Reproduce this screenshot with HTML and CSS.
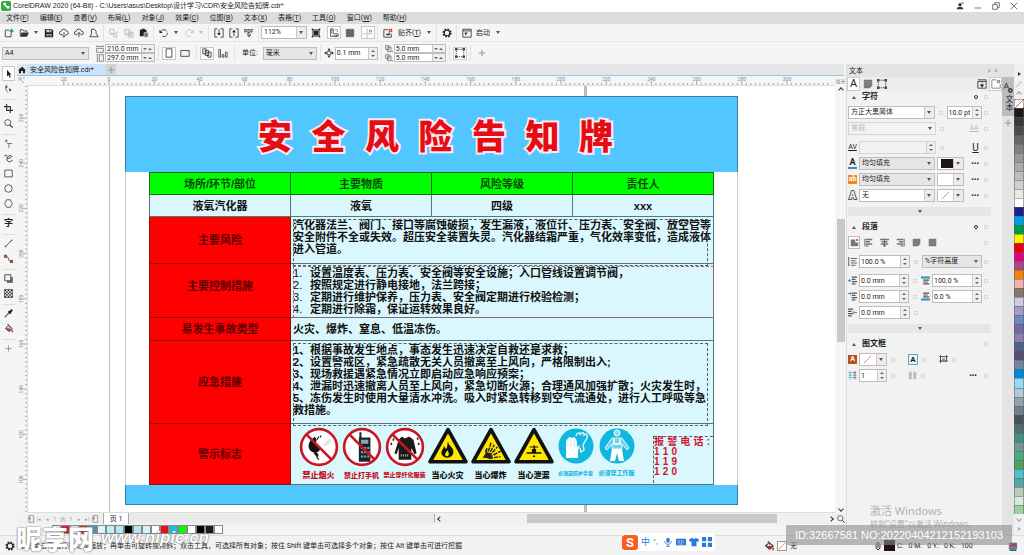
FILE: index.html
```html
<!DOCTYPE html>
<html lang="zh-CN">
<head>
<meta charset="utf-8">
<title>CorelDRAW 2020</title>
<link rel="stylesheet" href="styles.css">
</head>
<body>
<svg class="sprite" aria-hidden="true">
  <defs>
    <symbol id="new" viewBox="0 0 12 12"><path d="M6 2.500H1.500v8h7V6" class="ln"/><path d="M9 1v5M6.500 3.500h5" stroke="#1d9a50" stroke-width="1.800"/></symbol>
    <symbol id="open" viewBox="0 0 12 12"><path d="M1.500 10V2h3l1 1.500h4V5" class="ln"/><path d="M3 5.500h9L9.500 10.500h-8z" fill="#333"/></symbol>
    <symbol id="save" viewBox="0 0 12 12"><path d="M1 1.500h8.500L11 3v8H1z" fill="#222"/><path d="M3 2.500h6v2.500H3zM3 7.500h6v2.500H3z" fill="#ddd"/><path d="M7 2.500v2M4 9h4" stroke="#222"/></symbol>
    <symbol id="cloudd" viewBox="0 0 12 12"><path d="M4 8H2.500a2 2 0 0 1 0-4A3.300 3.300 0 0 1 9 4a2 2 0 0 1 .5 4H8M6 5v6M4 9l2 2 2-2" class="ln"/></symbol>
    <symbol id="cloudu" viewBox="0 0 12 12"><path d="M4 8H2.500a2 2 0 0 1 0-4A3.300 3.300 0 0 1 9 4a2 2 0 0 1 .5 4H8M6 11V5.500M4 7.500l2-2 2 2" class="ln"/></symbol>
    <symbol id="print" viewBox="0 0 12 12"><path d="M3 7V1.500h3.500L8.500 4v3M3 7 1 10.500h10L9 7" class="ln"/></symbol>
    <symbol id="cut" viewBox="0 0 12 12"><path d="M1 1.500h5v5H1zM6 7h3v4H6z" fill="none" stroke="#bbb"/><path d="M2 8h3M8 5h3" stroke="#bbb"/></symbol>
    <symbol id="copy" viewBox="0 0 12 12"><path d="M1 2h6v6H1zM5 5h6v6H5z" fill="#eee" stroke="#b5b5b5"/><path d="M6.500 7h3M6.500 9h3" stroke="#b5b5b5"/></symbol>
    <symbol id="paste" viewBox="0 0 12 12"><path d="M1 2h8v8H1zM3 1h4v2H3z" fill="#222"/><path d="M6 5.500h5v5.500H6z" fill="#777" stroke="#f4f4f4" stroke-width=".6"/></symbol>
    <symbol id="undo" viewBox="0 0 12 12"><path d="M2 4.500a4.200 4.200 0 1 1 2 5.500" class="ln" stroke-dasharray="9 1.500"/><path d="M.5 2v4h4z" fill="#222"/></symbol>
    <symbol id="redo" viewBox="0 0 12 12"><path d="M10 4.500a4.200 4.200 0 1 0-2 5.500" fill="none" stroke="#c4c4c4"/><path d="M11.500 2v4h-4z" fill="#c4c4c4"/></symbol>
    <symbol id="import" viewBox="0 0 12 12"><path d="M4 1H1v10h3M8 1h3v10H8M6 1.500v6" class="ln"/><path d="M3.800 6h4.400L6 9z" fill="#222"/></symbol>
    <symbol id="export" viewBox="0 0 12 12"><path d="M4 1H1v10h3M8 1h3v10H8M6 4v6" class="ln"/><path d="M3.800 5h4.400L6 2z" fill="#222"/></symbol>
    <symbol id="pdf" viewBox="0 0 12 12"><text x="0" y="5.500" font-size="6" font-weight="700" fill="#333">PDF</text><path d="M3 7h3v4M8 7c0 3-2 4-4 2" class="ln"/></symbol>
    <symbol id="full" viewBox="0 0 12 12"><path d="M3 3h6v6H3z" fill="#222"/><path d="m1 1 2 2M11 1 9 3M1 11l2-2M11 11 9 9" class="ln" stroke-width="1.600"/><path d="M2 2h8v8H2z" fill="none" stroke="#555"/></symbol>
    <symbol id="rulers" viewBox="0 0 12 12"><path d="M2 1v9h9V7H5V1zM2 3h1.500M2 5h1.500M7 10V8.500M9 10V8.500" class="ln"/><path d="M6.500 2H10v3" fill="none" stroke="#888"/></symbol>
    <symbol id="grid" viewBox="0 0 12 12"><path d="M1 1h10v10H1z" fill="#888"/><path d="M1 3.500h10M1 6h10M1 8.500h10M3.500 1v10M6 1v10M8.500 1v10" stroke="#444" stroke-width=".7"/></symbol>
    <symbol id="guides" viewBox="0 0 12 12"><path d="M0 7h12M5 1v11" fill="none" stroke="#999" stroke-dasharray="2 1"/><circle cx="9" cy="3.500" r="1.500" fill="none" stroke="#777"/></symbol>
    <symbol id="snapoff" viewBox="0 0 12 12"><path d="M6 2H1v9h9V7" class="ln"/><path d="M3 7h4V4L9 8 5 9z" fill="#333"/><path d="m7 1 4 4m0-4L7 5" stroke="#d22" stroke-width="1.300"/></symbol>
    <symbol id="gear" viewBox="0 0 12 12"><circle cx="6" cy="6" r="4.500" fill="none" stroke="#222" stroke-width="2" stroke-dasharray="2 1.530"/><circle cx="6" cy="6" r="3.300" fill="none" stroke="#222" stroke-width="1.300"/></symbol>
    <symbol id="launch" viewBox="0 0 12 12"><path d="M1 1.500h10v9.500H1zM1 3.500h10" class="ln"/><path d="M3 5.500h4L4 9z" fill="#333"/></symbol>
    <symbol id="wd" viewBox="0 0 12 12"><path d="M1 5h10v6H1zM1 1v2M11 1v2M1 2h10" fill="none" stroke="#555"/></symbol>
    <symbol id="ht" viewBox="0 0 12 12"><path d="M5 1h6v10H5zM1 1h2M1 11h2M2 1v10" fill="none" stroke="#555"/></symbol>
    <symbol id="port" viewBox="0 0 12 12"><path d="M2.500 1h7v10h-7z" class="ln"/></symbol>
    <symbol id="land" viewBox="0 0 12 12"><path d="M1 3h10v7H1z" class="ln"/></symbol>
    <symbol id="pages" viewBox="0 0 12 12"><path d="M1 1h4v6H1zM4 3h4v6H4zM7 5h4v6H7z" fill="#f4f4f4" stroke="#333"/></symbol>
    <symbol id="bars" viewBox="0 0 12 12"><path d="M1 2h2v9H1zM5 8h2v3H5zM9 5h2v6H9z" fill="none" stroke="#444"/></symbol>
    <symbol id="nudge" viewBox="0 0 12 12"><path d="M6 0l2 3H4zM6 12l2-3H4zM0 6l3-2v4zM12 6 9 4v4z" fill="#333"/><circle cx="6" cy="6" r="2.300" fill="none" stroke="#333"/></symbol>
    <symbol id="dup" viewBox="0 0 12 12"><path d="M1 1h5v6H1zM4 3h5v7H4zM10 10h2" fill="none" stroke="#555"/></symbol>
    <symbol id="bbox" viewBox="0 0 12 12"><path d="M1.500 1.500h9v9h-9z" fill="none" stroke="#333" stroke-dasharray="1.500 1"/><path d="M0 0h3v3H0zM9 0h3v3H9zM0 9h3v3H0zM9 9h3v3H9z" fill="#444"/></symbol>
    <symbol id="home" viewBox="0 0 12 12"><path d="m6 1 6 5.500h-1.500V11H7.500V7.500h-3V11H1.500V6.500H0z" fill="#222"/></symbol>
    <symbol id="pick" viewBox="0 0 12 12"><path d="M4 1v9l2-2 1.500 3.500L9 11 7.500 7.500H10z" fill="#222"/></symbol>
    <symbol id="shape" viewBox="0 0 12 12"><path d="M4 1C1 4 2 8 5 11" class="ln"/><path d="M2.500 3h2v2h-2zM7 5v5l1.500-1h2z" fill="#333"/></symbol>
    <symbol id="crop" viewBox="0 0 12 12"><path d="M3.500 0v8.500H12M0 3.500h8.500V12" fill="none" stroke="#333" stroke-width="1.500"/></symbol>
    <symbol id="zoomt" viewBox="0 0 12 12"><circle cx="5" cy="4.800" r="4" class="ln"/><path d="m8 8 3.500 3.500" class="ln" stroke-width="1.500"/></symbol>
    <symbol id="free" viewBox="0 0 12 12"><path d="M1 2.500h4M3 .5v4M4 6h7M6.500 6v6" fill="none" stroke="#555"/></symbol>
    <symbol id="art" viewBox="0 0 12 12"><path d="M1 3c0-2 3-2 3 0M4 6c-1-3 7-6 6-2-1 2-7 1-6 4 1 3 6 3 7 0" class="ln" stroke-width="1.300"/></symbol>
    <symbol id="rect" viewBox="0 0 12 12"><path d="M1 1.500h10v9H1z" class="ln"/></symbol>
    <symbol id="ell" viewBox="0 0 12 12"><circle cx="6" cy="6" r="5" class="ln"/></symbol>
    <symbol id="poly" viewBox="0 0 12 12"><path d="M3.500 1h5L11 6 8.500 11h-5L1 6z" class="ln"/></symbol>
    <symbol id="line" viewBox="0 0 12 12"><path d="m2 10 8-8" class="ln"/><path d="M1 9h2v2H1zM9 1h2v2H9z" fill="#555"/></symbol>
    <symbol id="conn" viewBox="0 0 12 12"><path d="m2 3 3 1 2 5 3 1" class="ln"/><path d="M0 1h4v4H0zM8 8h4v4H8z" fill="#8a5138"/></symbol>
    <symbol id="shadow" viewBox="0 0 12 12"><path d="M4 4h8v8H4z" fill="#777"/><path d="M1 1h8v8H1z" fill="#f4f4f4" stroke="#222"/></symbol>
    <symbol id="check" viewBox="0 0 12 12"><path d="M.5.500h11v11H.5z" fill="#fff" stroke="#333"/><path d="M1 2h10M1 6h10M1 10h10" stroke="#222" stroke-width="2" stroke-dasharray="2 2"/><path d="M3 4h8M3 8h8" stroke="#222" stroke-width="2" stroke-dasharray="2 2"/></symbol>
    <symbol id="drop" viewBox="0 0 12 12"><path d="m1 11 6-6" stroke="#8a6a50" stroke-width="2"/><path d="m6 3 3 3M8 4l3-3" stroke="#222" stroke-width="2.500"/></symbol>
    <symbol id="bucket" viewBox="0 0 12 12"><path d="m2 6 4-4 5 4-4 4z" fill="#fff" stroke="#333" stroke-width="1.300"/><path d="M2 6c3-1 5 0 8 0l-3 4z" fill="#a33"/><path d="M4 0c3 0 3 3 3 5" class="ln"/><path d="M11 8v3" stroke="#c33" stroke-width="2"/></symbol>
    <symbol id="plus" viewBox="0 0 12 12"><path d="M6 2v8M2 6h8" stroke="#999" stroke-width="1.300"/></symbol>
    <symbol id="block" viewBox="0 0 12 12"><path d="M1 1h10v7L8 11H1z" fill="#777"/><path d="M1 4h10M1 7h10" stroke="#999" stroke-width=".6"/></symbol>
    <symbol id="blockf" viewBox="0 0 12 12"><path d="M1 1h10v10H1z" fill="#777"/><path d="M1 4h10M1 7h10" stroke="#999" stroke-width=".6"/></symbol>
    <symbol id="al" viewBox="0 0 12 12"><path d="M1 1v10" stroke="#555"/><path d="M2 2h9M2 5h6M2 8h9M2 10.500h4" stroke="#777" stroke-width="1.800"/></symbol>
    <symbol id="ac" viewBox="0 0 12 12"><path d="M0 2h12M2 5h8M1 8h10M4 10.500h4" stroke="#777" stroke-width="1.800"/><path d="M6 1v10" stroke="#555"/></symbol>
    <symbol id="ar" viewBox="0 0 12 12"><path d="M11 1v10" stroke="#555"/><path d="M1 2h9M4 5h6M1 8h9M6 10.500h4" stroke="#777" stroke-width="1.800"/></symbol>
    <symbol id="an" viewBox="0 0 12 12"><path d="M1 2h6v4h4v5H1z" fill="#777"/><path d="m8 1 3 3m0-3L8 4" stroke="#d33" stroke-width="1.200"/></symbol>
    <symbol id="ind" viewBox="0 0 12 12"><path d="M5 1.500h7M5 4.500h5M5 7.500h7M5 10.500h5" stroke="#555" stroke-width="1.500"/><path d="M0 6h4M2 4v4" stroke="#2d9fc4" stroke-width="1.500"/></symbol>
    <symbol id="ind1" viewBox="0 0 12 12"><path d="M5 1.500h7M5 4.500h5M5 7.500h7M5 10.500h5" stroke="#555" stroke-width="1.500"/><path d="M0 2h5M3 0v4" stroke="#2d9fc4" stroke-width="1.300"/></symbol>
    <symbol id="indr" viewBox="0 0 12 12"><path d="M0 1.500h7M0 4.500h5M0 7.500h7M0 10.500h5" stroke="#555" stroke-width="1.500"/><path d="M7 6h5M8 4v4" stroke="#2d9fc4" stroke-width="1.300"/></symbol>
    <symbol id="lsp" viewBox="0 0 12 12"><path d="M4 2h8M4 5h6M4 8h8M4 11h6M1 1v10M0 1h2M0 11h2" stroke="#555" stroke-width="1.200"/></symbol>
    <symbol id="bef" viewBox="0 0 12 12"><path d="M0 2h12" stroke="#2d9fc4" stroke-width="3"/><path d="M3 5.500h8M3 8h6M3 10.500h8" stroke="#555" stroke-width="1.400"/></symbol>
    <symbol id="aft" viewBox="0 0 12 12"><path d="M0 10h12" stroke="#2d9fc4" stroke-width="3"/><path d="M3 1.500h8M3 4h6M3 6.500h8" stroke="#555" stroke-width="1.400"/></symbol>
    <symbol id="cols" viewBox="0 0 12 12"><path d="M3 1v10" stroke="#5bb5d0" stroke-width="4" stroke-dasharray="1.500 .8"/><path d="M9 1v10" stroke="#777" stroke-width="4" stroke-dasharray="1.500 .8"/></symbol>
    <symbol id="cols2" viewBox="0 0 12 12"><path d="M3 1v10M9 1v10" stroke="#bbb" stroke-width="4"/></symbol>
    <symbol id="frm" viewBox="0 0 12 12"><path d="M2 2h8v6H2zM0 2h2M10 2h2M0 8h12M2 0v11M10 0v9" fill="none" stroke="#444"/><path d="M4 4h4M4 6h4" stroke="#777"/></symbol>
    <symbol id="none" viewBox="0 0 12 12"><path d="M1 11 11 1" stroke="#d66" stroke-width="1"/></symbol>
    <symbol id="store" viewBox="0 0 12 12"><path d="M1 3h10v8H1zM1 1h10v2" class="ln"/><path d="M6 4v3M4 7h4L6 10z" fill="#222" stroke="#222" stroke-width=".6"/></symbol>
    <symbol id="pin" viewBox="0 0 12 12"><path d="M6 1H1v10h10V6" fill="none" stroke="#777"/><circle cx="9" cy="3" r="1.500" class="ln"/></symbol>
    <symbol id="leaf" viewBox="0 0 12 12"><rect width="12" height="12" rx="2" fill="#3da748"/><path d="m3 3 6 6M3 3h3M9 9V6" stroke="#fff" stroke-width="2"/></symbol>
    <symbol id="fig" viewBox="0 0 12 12"><circle cx="6" cy="4" r="2.500" fill="#333"/><path d="M1 11c0-5 10-5 10 0z" fill="#333"/><path d="M10 0v3M8.500 1.500h3" stroke="#c33"/></symbol>
    <symbol id="pg" viewBox="0 0 12 12"><path d="M3 1h7v10H3zM1 5h5M4 3v5" fill="none" stroke="#777"/></symbol>
  </defs>
</svg>

<div class="app">
  <header class="titlebar">
    <svg class="ic"><use href="#leaf"/></svg>
    <h1>CorelDRAW 2020 (64-Bit) - C:\Users\asus\Desktop\设计学习\CDR\安全风险告知牌.cdr*</h1>
    <div class="winctl">
      <button aria-label="用户"><svg class="ic"><use href="#fig"/></svg></button>
      <button aria-label="最小化"><svg class="ic" viewBox="0 0 12 12"><path d="M1 9h10" class="ln"/></svg></button>
      <button aria-label="还原"><svg class="ic" viewBox="0 0 12 12"><path d="M1 4h7v7H1zM4 4V1h7v7H8" class="ln"/></svg></button>
      <button aria-label="关闭"><svg class="ic" viewBox="0 0 12 12"><path d="m1 1 10 10m0-10L1 11" class="ln"/></svg></button>
    </div>
  </header>
  <nav class="menubar">
    <button>文件(<u>F</u>)</button><button>编辑(<u>E</u>)</button><button>查看(<u>V</u>)</button><button>布局(<u>L</u>)</button><button>对象(<u>J</u>)</button><button>效果(<u>C</u>)</button><button>位图(<u>B</u>)</button><button>文本(<u>X</u>)</button><button>表格(<u>T</u>)</button><button>工具(<u>O</u>)</button><button>窗口(<u>W</u>)</button><button>帮助(<u>H</u>)</button>
  </nav>
  <div class="toolbar">
    <button aria-label="新建"><svg class="ic"><use href="#new"/></svg></button>
    <button aria-label="打开"><svg class="ic"><use href="#open"/></svg></button>
    <i class="caret"></i>
    <button aria-label="保存"><svg class="ic"><use href="#save"/></svg></button>
    <button aria-label="云下载"><svg class="ic"><use href="#cloudd"/></svg></button>
    <button aria-label="云上传"><svg class="ic"><use href="#cloudu"/></svg></button>
    <button aria-label="打印"><svg class="ic"><use href="#print"/></svg></button>
    <i class="sep"></i>
    <button aria-label="剪切"><svg class="ic"><use href="#cut"/></svg></button>
    <button aria-label="复制"><svg class="ic"><use href="#copy"/></svg></button>
    <button aria-label="粘贴"><svg class="ic"><use href="#paste"/></svg></button>
    <i class="sep"></i>
    <button aria-label="撤消"><svg class="ic"><use href="#undo"/></svg></button>
    <i class="caret"></i>
    <button aria-label="重做"><svg class="ic"><use href="#redo"/></svg></button>
    <i class="caret pale"></i>
    <i class="sep"></i>
    <button aria-label="导入"><svg class="ic"><use href="#import"/></svg></button>
    <button aria-label="导出"><svg class="ic"><use href="#export"/></svg></button>
    <button aria-label="发布为PDF"><svg class="ic"><use href="#pdf"/></svg></button>
    <i class="sep"></i>
    <span class="sel white zoomsel"><select aria-label="缩放级别"><option>112%</option></select></span>
    <button class="wide" aria-label="全屏预览"><svg class="ic"><use href="#full"/></svg></button>
    <button class="on" aria-label="标尺"><svg class="ic"><use href="#rulers"/></svg></button>
    <button class="wide" aria-label="网格"><svg class="ic"><use href="#grid"/></svg></button>
    <button class="on" aria-label="辅助线"><svg class="ic"><use href="#guides"/></svg></button>
    <i class="sep"></i>
    <button aria-label="关闭贴齐"><svg class="ic"><use href="#snapoff"/></svg></button>
    <button class="txt"><span>贴齐(<u>T</u>)</span></button>
    <i class="caret"></i>
    <i class="sep"></i>
    <button aria-label="选项"><svg class="ic"><use href="#gear"/></svg></button>
    <i class="sep"></i>
    <button class="txt"><svg class="ic"><use href="#launch"/></svg>启动</button>
    <i class="caret"></i>
  </div>
  <div class="propbar">
    <span class="sel papersel"><select aria-label="页面大小"><option>A4</option></select></span>
    <div class="pair pagepair">
      <label><svg class="ic sm"><use href="#wd"/></svg><span class="num two"><input value="210.0 mm" aria-label="宽度"></span></label>
      <label><svg class="ic sm"><use href="#ht"/></svg><span class="num two"><input value="297.0 mm" aria-label="高度"></span></label>
    </div>
    <i class="sep"></i>
    <button class="on" aria-label="纵向"><svg class="ic"><use href="#port"/></svg></button>
    <button class="wide" aria-label="横向"><svg class="ic"><use href="#land"/></svg></button>
    <i class="sep"></i>
    <button class="on" aria-label="所有页面"><svg class="ic"><use href="#pages"/></svg></button>
    <button class="wide" aria-label="当前页面"><svg class="ic"><use href="#bars"/></svg></button>
    <i class="sep"></i>
    <label class="unit" for="unit">单位:</label>
    <span class="sel unitsel"><select id="unit"><option>毫米</option></select></span>
    <i class="sep"></i>
    <svg class="ic"><use href="#nudge"/></svg>
    <span class="num nudge"><input value="0.1 mm" aria-label="微调距离"></span>
    <i class="sep"></i>
    <div class="pair duppair">
      <label><svg class="ic sm"><use href="#dup"/></svg><span class="num two"><input value="5.0 mm" aria-label="再制 X"></span></label>
      <label><svg class="ic sm"><use href="#dup"/></svg><span class="num two"><input value="5.0 mm" aria-label="再制 Y"></span></label>
    </div>
    <i class="sep"></i>
    <button class="on" aria-label="视为已填充"><svg class="ic"><use href="#bbox"/></svg></button>
    <i class="sep"></i>
    <button class="wide" aria-label="自定义"><svg class="ic"><use href="#plus"/></svg></button>
  </div>

  <div class="work">
    <aside class="toolbox">
      <button class="on" aria-label="选择"><svg class="ic"><use href="#pick"/></svg></button>
      <button class="end" aria-label="形状"><svg class="ic"><use href="#shape"/></svg></button>
      <button aria-label="裁剪"><svg class="ic"><use href="#crop"/></svg></button>
      <button class="end" aria-label="缩放"><svg class="ic"><use href="#zoomt"/></svg></button>
      <button aria-label="手绘"><svg class="ic"><use href="#free"/></svg></button>
      <button aria-label="艺术笔"><svg class="ic"><use href="#art"/></svg></button>
      <button aria-label="矩形"><svg class="ic"><use href="#rect"/></svg></button>
      <button aria-label="椭圆形"><svg class="ic"><use href="#ell"/></svg></button>
      <button class="end" aria-label="多边形"><svg class="ic"><use href="#poly"/></svg></button>
      <button class="end word">字</button>
      <button aria-label="平行度量"><svg class="ic"><use href="#line"/></svg></button>
      <button class="end" aria-label="连接器"><svg class="ic"><use href="#conn"/></svg></button>
      <button aria-label="阴影"><svg class="ic"><use href="#shadow"/></svg></button>
      <button class="end" aria-label="透明度"><svg class="ic"><use href="#check"/></svg></button>
      <button aria-label="颜色滴管"><svg class="ic"><use href="#drop"/></svg></button>
      <button class="end" aria-label="交互式填充"><svg class="ic"><use href="#bucket"/></svg></button>
      <button aria-label="添加工具"><svg class="ic"><use href="#plus"/></svg></button>
    </aside>

    <main class="center">
      <div class="doctabs">
        <button class="homebtn" aria-label="欢迎屏幕"><svg class="ic"><use href="#home"/></svg></button>
        <button class="doctab">安全风险告知牌.cdr*</button>
        <button class="addtab" aria-label="新文档"><svg class="ic"><use href="#plus"/></svg></button>
      </div>
      <div class="stage">
        <svg class="corner" viewBox="0 0 10 9"><path d="M2 2l5 5M2 5V2h3M6 2h2" fill="none" stroke="#aaa"/></svg>
        <svg class="hruler" id="hruler"></svg>
        <svg class="vruler" id="vruler"></svg>
        <div class="canvas">
          <div class="guide"></div>
          <section class="sheet">
            <h2 class="headline"><span>安</span><span>全</span><span>风</span><span>险</span><span>告</span><span>知</span><span>牌</span></h2>
            <table class="card">
              <tr class="green"><th>场所/环节/部位</th><th>主要物质</th><th>风险等级</th><th>责任人</th></tr>
              <tr class="vals"><td>液氧汽化器</td><td>液氧</td><td>四级</td><td>xxx</td></tr>
              <tr class="r1"><th>主要风险</th><td colspan="3"><p class="frame narrow">汽化器法兰、阀门、接口等腐蚀破损，发生漏液，液位计、压力表、安全阀、放空管等<br>安全附件不全或失效。超压安全装置失灵。汽化器结霜严重，气化效率变低，造成液体<br>进入管道。</p></td></tr>
              <tr class="r2"><th>主要控制措施</th><td colspan="3"><ol class="frame">
                <li>设置温度表、压力表、安全阀等安全设施；入口管线设置调节阀，</li>
                <li>按照规定进行静电接地，法兰跨接；</li>
                <li>定期进行维护保养，压力表、安全阀定期进行校验检测；</li>
                <li>定期进行除霜，保证运转效果良好。</li></ol></td></tr>
              <tr class="r3"><th>易发生事故类型</th><td colspan="3"><p>火灾、爆炸、窒息、低温冻伤。</p></td></tr>
              <tr class="r4"><th>应急措施</th><td colspan="3"><p class="frame narrow">1、根据事故发生地点，事态发生迅速决定自救还是求救；<br>2、设置警戒区，紧急疏散无关人员撤离至上风向，严格限制出入;<br>3、现场救援遇紧急情况立即启动应急响应预案；<br>4、泄漏时迅速撤离人员至上风向，紧急切断火源；合理通风加强扩散；火灾发生时，<br>5、冻伤发生时使用大量清水冲洗。吸入时紧急转移到空气流通处，进行人工呼吸等急<br>救措施。</p></td></tr>
              <tr class="r5"><th>警示标志</th><td colspan="3"><div class="signs">
                <figure class="ban"><svg viewBox="0 0 38 38"><circle cx="19" cy="19" r="17.500" fill="#fff"/><path d="M15 10c-5 3-7 8-4 12 3 3 8 2 9-2-4 1-2-4-5-5 2-1 1-4 0-5zM14 25c4-1 5 2 3 4l2 2M20 10l1-2M17 12l2-3" fill="#111" stroke="#111"/><path d="m24 18 6-6" stroke="#e4e4e4" stroke-width="3"/><circle cx="19" cy="19" r="17" class="ring"/><path d="m7 7 24 24" class="ring"/></svg><figcaption>禁止烟火</figcaption></figure>
                <figure class="ban s7"><svg viewBox="0 0 38 38"><circle cx="19" cy="19" r="17.500" fill="#fff"/><path d="M16 10h11v23H16z" fill="#16262e"/><path d="M17.500 5v6" stroke="#16262e" stroke-width="2"/><path d="M18 12h7v4h-7zM18 19h2v2h-2zM21 19h2v2h-2zM24 19h2v2h-2zM18 23h2v2h-2zM21 23h2v2h-2zM24 23h2v2h-2zM18 27h2v2h-2zM21 27h2v2h-2zM24 27h2v2h-2z" fill="#8aa5ae"/><circle cx="19" cy="19" r="17" class="ring"/><path d="m7 7 24 24" class="ring"/></svg><figcaption>禁止打手机</figcaption></figure>
                <figure class="ban s6"><svg viewBox="0 0 38 38"><circle cx="19" cy="19" r="17.500" fill="#fff"/><path d="m16 9 3 2 4-2 4 3 3 13-2 1-3-6v11H13V20l-2 6-2-1 4-13z" fill="#1a1a1a"/><path d="M15 27h7" stroke="#aaa" stroke-width="2" stroke-dasharray="1 1"/><path d="M8 11v2M6 15v2M31 10v2M32 15v2" stroke="#222" stroke-width="1.500"/><circle cx="19" cy="19" r="17" class="ring"/><path d="m7 7 24 24" class="ring"/></svg><figcaption>禁止穿纤化服装</figcaption></figure>
                <figure><svg viewBox="0 0 38 38"><path d="M19 2.500 36 33H2z" class="tri"/><path d="M19 14c1 5 6 5 5 11-1 5-9 6-11 1-1-4 2-5 2-8l2 3c2-2 1-5 2-7z" fill="#111"/><path d="M18.500 22c1 2 2 3 1 5-2 2-4 0-3-2z" fill="#ffe600"/></svg><figcaption>当心火灾</figcaption></figure>
                <figure><svg viewBox="0 0 38 38"><path d="M19 2.500 36 33H2z" class="tri"/><path d="m14 29 1-9M15 28l4-13M16 28l6-11M17 28l8-9M17 29l11-6M17 30l11-2" fill="none" stroke="#222" stroke-width="1.400" stroke-dasharray="4 1"/><path d="m11 29 3-4-1-4 3 4 3 0-2 5z" fill="#222"/></svg><figcaption>当心爆炸</figcaption></figure>
                <figure><svg viewBox="0 0 38 38"><path d="M19 2.500 36 33H2z" class="tri"/><path d="M12 24h5v-3h4v3h5v1.500H12zM15 18.500h8v1h-8zM18.500 17.500h1.500v5h-1.500zM18 27h2v1.500h-2z" fill="#111"/></svg><figcaption>当心泄漏</figcaption></figure>
                <figure class="must s5"><svg viewBox="0 0 38 38"><circle cx="19" cy="19" r="17.500" fill="#10b8e0"/><path d="M9 31V14l2-3 2-1 2 1 2-1 2 2 1 3v5l3-2-2 6v7z" fill="#fff"/><path d="M11 12v8M14 12v8M17 12v8" stroke="#a5e4f2" stroke-width=".7"/><path d="M19 9c1-4 4-4 4-1 1-3 4-3 4 0 2-2 4 0 3 3l-4 7 1 5-3 2-1-4" fill="none" stroke="#d8f4fb" stroke-width="1.500"/></svg><figcaption>必须戴防护手套</figcaption></figure>
                <figure class="must s6"><svg viewBox="0 0 38 38"><circle cx="19" cy="19" r="17.500" fill="#10b8e0"/><circle cx="19" cy="6" r="3" fill="#8fdcf0" stroke="#fff"/><path d="m14 11 10 0 7 10-2 2-5-6v5l-10 0v-5l-5 6-2-2z" fill="#6fd2ea" stroke="#e8fafd"/><path d="M14 22h10l2 12h-5l-2-8-2 8h-5z" fill="#fff"/><path d="M16 12v5h6v-5" fill="none" stroke="#fff" stroke-width="1.500"/></svg><figcaption>必须穿工作服</figcaption></figure>
                <div class="phone"><p><span>报</span><span>警</span><span>电</span><span>话</span><span>:</span></p><p class="n"><span>1</span><span>1</span><span>0</span></p><p class="n"><span>1</span><span>1</span><span>9</span></p><p class="n"><span>1</span><span>2</span><span>0</span></p></div>
              </div></td></tr>
            </table>
            <div class="foot"></div>
          </section>
        </div>
        <div class="vscroll"><span class="mm">毫米</span><button aria-label="向上滚动"><i class="chev up"></i></button><i class="thumb"></i><button aria-label="向下滚动"><i class="chev"></i></button></div>
      </div>
      <div class="pagebar">
        <svg class="ic sm"><use href="#pg"/></svg><span class="nav">|◂</span><span class="nav">◂</span><span class="nav">1</span><span class="nav">的</span><span class="nav">1</span><span class="nav">▸</span><span class="nav">▸|</span><svg class="ic sm"><use href="#pg"/></svg>
        <button class="pagetab">页 1</button>
        <div class="hpad"></div>
        <button class="arrow" aria-label="向左滚动"><i class="chev left"></i></button>
        <div class="hscroll"><i class="hthumb"></i></div>
        <button class="arrow" aria-label="向右滚动"><i class="chev right"></i></button>
        <button class="arrow" aria-label="导航器"><svg class="ic sm"><use href="#zoomt"/></svg></button>
      </div>
      <div class="docpal" id="docpal"></div>
    </main>

    <aside class="docker">
      <header><span>文本</span><span class="dctl">»&nbsp; ×</span></header>
      <div class="dtabs">
        <button class="on big">A</button><button aria-label="段落"><svg class="ic"><use href="#block"/></svg></button><button aria-label="图文框"><svg class="ic"><use href="#bbox"/></svg></button>
        <button class="push" aria-label="保存样式"><svg class="ic"><use href="#store"/></svg></button><button class="on" aria-label="固定"><svg class="ic"><use href="#pin"/></svg></button>
      </div>
      <div class="dbody">
        <h3><i class="fold"></i>字符<i class="ringdot"></i><i class="cb"></i></h3>
        <div class="row"><span class="sel white w87"><select aria-label="字体"><option>方正大黑简体</option></select></span><i class="cb"></i><span class="num w34"><input value="10.0 pt" aria-label="字号"></span><i class="cb last"></i></div>
        <div class="row off"><span class="sel w87"><select disabled aria-label="字体样式"><option>常规</option></select></span><i class="cb"></i><b class="g aa push">AA</b><i class="cb"></i></div>
        <div class="row tall off"><b class="g av">AV</b><span class="num w77"><input disabled aria-label="字距"></span><i class="cb"></i><b class="g under push">U</b><i class="cb"></i></div>
        <div class="row"><b class="g ga">A</b><span class="sel w77"><select aria-label="填充类型"><option>均匀填充</option></select></span><span class="sel white w27 colr"><i class="chip dark"></i></span><b class="dots">•••</b><i class="cb last"></i></div>
        <div class="row"><b class="g gab">ab</b><span class="sel w77"><select aria-label="背景填充类型"><option>均匀填充</option></select></span><span class="sel white w27 colr"></span><b class="dots">•••</b><i class="cb last"></i></div>
        <div class="row"><b class="g go">A</b><span class="sel white w77"><select aria-label="轮廓宽度"><option>无</option></select></span><span class="sel white w27 colr"><svg class="ic"><use href="#none"/></svg></span><b class="dots">•••</b><i class="cb last"></i></div>
        <button class="more" aria-label="更多字符选项"><i class="caret"></i></button>
        <h3><i class="fold"></i>段落<i class="ringdot"></i><i class="cb"></i></h3>
        <div class="row aligns"><button class="on" aria-label="无对齐"><svg class="ic"><use href="#an"/></svg></button><svg class="ic"><use href="#al"/></svg><svg class="ic"><use href="#ac"/></svg><svg class="ic"><use href="#ar"/></svg><svg class="ic"><use href="#block"/></svg><svg class="ic"><use href="#blockf"/></svg><i class="cb last"></i></div>
        <div class="row tall"><svg class="ic"><use href="#lsp"/></svg><span class="num w51"><input value="100.0 %" aria-label="行间距"></span><i class="cb"></i><span class="sel w60"><select aria-label="行距单位"><option>%字符高度</option></select></span><i class="cb last"></i></div>
        <div class="row tall"><svg class="ic"><use href="#ind"/></svg><span class="num w51"><input value="0.0 mm" aria-label="左缩进"></span><i class="cb"></i><svg class="ic"><use href="#bef"/></svg><span class="num w51"><input value="100.0 %" aria-label="段前间距"></span><i class="cb last"></i></div>
        <div class="row"><svg class="ic"><use href="#ind1"/></svg><span class="num w51"><input value="0.0 mm" aria-label="首行缩进"></span><i class="cb"></i><svg class="ic"><use href="#aft"/></svg><span class="num w51"><input value="0.0 %" aria-label="段后间距"></span><i class="cb last"></i></div>
        <div class="row"><svg class="ic"><use href="#indr"/></svg><span class="num w51"><input value="0.0 mm" aria-label="右缩进"></span><i class="cb"></i></div>
        <button class="more" aria-label="更多段落选项"><i class="caret"></i></button>
        <h3><i class="fold"></i>图文框<i class="cb last"></i></h3>
        <div class="row frames"><b class="g gbox">A</b><span class="sel white w27 colr"><svg class="ic"><use href="#none"/></svg></span><i class="cb"></i><b class="g gblue sp">A</b><i class="cb"></i><svg class="ic sp"><use href="#frm"/></svg><i class="cb"></i></div>
        <div class="row frames"><svg class="ic"><use href="#cols"/></svg><span class="num w27"><input value="1" aria-label="栏数"></span><i class="cb"></i><svg class="ic sp"><use href="#cols2"/></svg><i class="cb"></i><b class="dots push">•••</b><i class="cb"></i></div>
      </div>
      <div class="activate"><p>激活 Windows</p><p class="small">转到“设置”以激活 Windows。</p></div>
    </aside>
    <div class="sidetabs"><button class="vtab"><svg class="ic" viewBox="0 0 12 12"><path d="M1 7 4 0l3 7M2 5h4" class="ln"/><circle cx="9" cy="9" r="2" fill="none" stroke="#222" stroke-width="1.500"/></svg>文本</button><button aria-label="添加泊坞窗"><svg class="ic"><use href="#plus"/></svg></button></div>
    <div class="palette">
      <button aria-label="展开"><i class="tri-r"></i></button>
      <button aria-label="滴管"><svg class="ic sm" viewBox="0 0 12 12"><path d="m1 11 8-8M7 2l3 3" stroke="#999"/></svg></button>
      <button aria-label="向上"><i class="chev up pale"></i></button>
      <div class="swatches" id="swatches"></div>
      <button aria-label="向下"><i class="chev pale"></i></button>
      <button aria-label="更多">»</button>
    </div>
  </div>

  <footer class="status">
    <svg class="ic"><use href="#gear"/></svg>
    <p>接着单击可进行拖动或缩放；再单击可旋转或倾斜；双击工具，可选择所有对象；按住 Shift 键单击可选择多个对象；按住 Alt 键单击可进行挖掘</p>
    <div class="fillinfo"><svg class="ic"><use href="#bucket"/></svg><svg class="ic boxed"><use href="#none"/></svg><span>无</span></div>
    <div class="ink"><svg class="ic sm" viewBox="0 0 12 12"><path d="M6 0l3 4v5l-3 3-3-3V4zM6 3v6" fill="none" stroke="#333" stroke-width="1.500"/></svg><i class="chip dark"></i><span>C: &nbsp; 0 M: &nbsp; 0 Y: &nbsp; 0 K: &nbsp; 100</span></div>
    <svg class="ic proof" viewBox="0 0 12 12"><path d="M1 2h10v8H1z" fill="#5c7fa5"/><path d="M2 3h8v3H2z" fill="#c33"/><path d="M2 10h8v2H2z" fill="#555"/></svg>
    <div class="ime"><b class="sogou">S</b><span>中</span><span class="dotm">°,</span><svg class="ic" viewBox="0 0 12 12"><rect x="4" y="1" width="4" height="6" rx="2" fill="#2c7ad6"/><path d="M2 5c0 5 8 5 8 0M6 9v3M4 11.500h4" fill="none" stroke="#2c7ad6"/></svg><svg class="ic" viewBox="0 0 12 12"><path d="M0 2h12v8H0z" fill="#2c7ad6"/><path d="M2 4.500h8M2 6.500h8M3 8.500h6" stroke="#fff" stroke-dasharray="1 1"/></svg><svg class="ic" viewBox="0 0 12 12"><path d="M4 1 0 3l1 3 2-1v6h6V5l2 1 1-3-4-2c-1 2-3 2-4 0z" fill="#2c7ad6"/></svg><svg class="ic" viewBox="0 0 12 12"><path d="M0 0h5v5H0zM7 0h5v5H7zM0 7h5v5H0zM7 7h5v5H7z" fill="#2c7ad6"/></svg></div>
  </footer>
  <div class="mark"><b>昵享网</b><em>www.nipic.cn</em></div>
  <div class="idband">ID:32667581 NO:20220404212152193103</div>
</div>
<script src="script.js"></script>
</body>
</html>
```

FILE: styles.css
```css
* { box-sizing: border-box; }
body {
  margin: 0;
  height: 100vh;
  overflow: hidden;
  background: #f4f4f4;
  color: #222;
  font: 7px/10px Roboto, "Noto Sans CJK SC", sans-serif;
}
h1, h2, h3, p, ol, figure { margin: 0; padding: 0; font-weight: inherit; }
button, input, select { font: inherit; color: inherit; margin: 0; }
button { border: 0; padding: 0; background: none; display: flex; align-items: center; justify-content: center; }
i { font-style: normal; }
.sprite { position: absolute; width: 0; height: 0; }
.ln { fill: none; stroke: #333; }
.ic { width: 10px; height: 10px; flex: none; display: block; }
.ic.sm { width: 8px; height: 8px; }
.push { margin-left: auto; }

.app { position: relative; height: 100%; display: flex; flex-direction: column; }

.titlebar { height: 12px; background: #fff; display: flex; align-items: center; padding: 0 6px 0 1px; gap: 2px; }
.titlebar h1 { font: 7px/10px "Liberation Sans", "Noto Sans CJK SC", sans-serif; white-space: nowrap; flex: 1; }
.winctl { display: flex; gap: 10px; }
.winctl .ic { width: 8px; height: 8px; }

.menubar { height: 12px; background: #dcdcdc; display: flex; padding-left: 6px; gap: 11px; }
.menubar button { white-space: nowrap; }

.toolbar, .propbar { display: flex; align-items: center; background: #f5f5f5; }
.toolbar { height: 18px; padding-left: 1px; border-bottom: 1px solid #e6e6e6; }
.propbar { height: 22px; padding-left: 2px; }
.toolbar button, .propbar button { width: 15px; height: 13px; }
.toolbar .on, .propbar .on { width: 14px; background: #fff; border: 1px solid #c8c8c8; }
.toolbar .on { margin-left: 3px; }
.toolbar .wide, .propbar .wide { width: 17px; }
.toolbar .txt { width: auto; gap: 4px; padding: 0 3px; }
.sep { width: 1px; height: 16px; background: #e2e2e2; margin: 0 2px; }
.propbar .sep { margin: 0 3px; }
.caret { width: 0; height: 0; border: 2px solid transparent; border-top: 3px solid #555; border-bottom: 0; margin: 0 3px; }
.caret.pale { border-top-color: #bbb; }

.sel { position: relative; display: flex; height: 13px; border: 1px solid #bdbdbd; background: #e6e6e6; overflow: hidden; }
.sel.white { background: #fff; }
.sel select { appearance: none; border: 0; background: none; padding: 0 10px 0 2px; width: 100%; height: 11px; line-height: 11px; border-radius: 0; }
.sel::after { content: ""; position: absolute; right: 3px; top: 4px; border: 2px solid transparent; border-top: 3px solid #555; border-bottom: 0; }
.sel.white::before { content: ""; position: absolute; right: 0; top: 0; bottom: 0; width: 9px; background: #ececec; border-left: 1px solid #c8c8c8; }
.zoomsel { width: 46px; }
.papersel { width: 87px; }
.unitsel { width: 54px; }
.unit { padding: 0 5px 0 4px; }

.num { position: relative; display: flex; height: 13px; border: 1px solid #bdbdbd; background: #fff; }
.num input {
  width: 100%; min-width: 0; border: 0; padding: 0 9px 0 1px; height: 100%;
  background: linear-gradient(90deg, transparent calc(100% - 9px), #c8c8c8 0, #c8c8c8 calc(100% - 8px), #efefef 0);
}
.num::before, .num::after { content: ""; position: absolute; right: 2px; border: 2px solid transparent; }
.num::before { top: 2px; border-bottom: 2px solid #666; border-top: 0; }
.num::after { bottom: 2px; border-top: 2px solid #666; border-bottom: 0; }
.num.nudge { width: 43px; margin-left: 1px; }
.pair label { display: flex; align-items: center; gap: 1px; }
.pair .num { height: 9px; }
.pair .num input {
  padding-right: 12px;
  background: linear-gradient(90deg, transparent calc(100% - 13px), #c8c8c8 0, #c8c8c8 calc(100% - 12px), #efefef 0);
}
.pair .num.two::before { top: 3px; right: 2px; }
.pair .num.two::after { bottom: 2px; right: 7px; }
.pagepair { margin-left: 7px; }
.pagepair .num { width: 50px; }
.duppair .num { width: 52px; }

.work { flex: 1; min-height: 0; display: grid; grid-template-columns: 17px 1fr 156px 12px 10px; }

.toolbox { display: flex; flex-direction: column; align-items: center; background: #f5f5f5; padding-top: 2px; }
.toolbox button { width: 13px; height: 15px; flex: none; }
.toolbox .on { background: #fff; border: 1px solid #c8c8c8; }
.toolbox .end { height: 19px; padding-bottom: 4px; border-bottom: 1px solid #ddd; margin-bottom: 1px; }
.toolbox .word { font-size: 9px; font-weight: 700; }
.toolbox .ic { width: 9px; height: 9px; }

.center { display: flex; flex-direction: column; min-width: 0; }
.doctabs { height: 12px; flex: none; background: #e6e6e6; display: flex; border-bottom: 1px solid #8fc9e8; margin-right: 2px; }
.homebtn { width: 10px; }
.homebtn .ic { width: 8px; height: 8px; }
.doctab { background: #cbe2fa; padding: 0 12px 0 3px; }
.addtab { width: 10px; background: #d4d4d4; }
.stage { flex: 1; min-height: 0; display: grid; grid-template: 9px 1fr / 10px 1fr 11px; background: #f5f5f5; }
.corner, .hruler, .vruler { width: 100%; height: 100%; display: block; }
.hruler text, .vruler text { font-size: 5px; fill: #888; }
.canvas { grid-column: 2; grid-row: 2; background: #fff; position: relative; overflow: hidden; border: 1px solid #ddd; border-width: 1px 0 1px 1px; }
.vruler { grid-column: 1; grid-row: 2; }
.guide { position: absolute; left: 81px; top: 0; bottom: 0; width: 1px; background: #bbb; }
.canvas::before { content: ""; position: absolute; left: 556px; top: 0; bottom: 0; width: 3px; background: #bbb; }

.sheet { position: absolute; left: 97px; top: 10px; width: 613px; background: #fff; border: 1px solid #ccc; border-width: 0 1px; font: 700 11px/12px "Liberation Sans", "Noto Sans CJK SC", sans-serif; color: #111; }
.headline { height: 76px; margin: 0 -1px; background: #52c6fe; border: 1px solid #3b7f9f; border-bottom: 0; display: flex; justify-content: space-between; align-items: center; padding: 0 124px 0 132px; }
.headline span { font: 900 34px/40px "Noto Sans CJK SC", sans-serif; color: #e50c13; -webkit-text-stroke: 4px #fbe9f2; paint-order: stroke fill; }
.foot { height: 20px; margin: 0 -1px; background: #52c6fe; border: 1px solid #3b7f9f; border-top: 0; }
.card { table-layout: fixed; border-collapse: collapse; width: calc(100% - 46px); margin: 0 23px; background: #d9f7fd; }
.card th, .card td { border: 1px solid #53777c; padding: 0; height: 22px; text-align: center; font-weight: 700; position: relative; }
.card tr > th:first-child { background: #f00; color: #5a0000; border-color: #8b1010; }
.card .green > th, .card .green > th:first-child { background: #0f0; color: #064a06; border-color: #1d6a1d; }
.card td[colspan] { text-align: left; vertical-align: top; white-space: nowrap; padding-left: 2px; }
.card .r1 > * { height: 47px; }
.card .r2 > * { height: 54px; }
.card .r2 > th { padding-bottom: 9px; }
.card .r3 > * { height: 23px; }
.card .r4 > * { height: 83px; }
.card .r5 > * { height: 61px; }
.card .r1 p { padding-top: 2px; }
.card .r3 p { padding-top: 5px; }
.card .r4 p { padding-top: 3px; }
.frame::before { content: ""; position: absolute; left: 2px; right: 0; top: 2px; bottom: -3px; border: 1px dashed #4b6669; }
.frame.narrow::before { right: 5px; }
ol.frame { list-style: none; counter-reset: n; padding-top: 3px; }
ol.frame::before { border-color: #9b6670; right: -1px; bottom: -1px; }
ol.frame li { counter-increment: n; display: flex; }
ol.frame li::before { content: counter(n) "."; width: 17px; font-weight: 400; }

.signs { display: flex; padding: 3px 0 0 4px; position: relative; z-index: 1; }
.signs figure { width: 43px; display: flex; flex-direction: column; align-items: center; }
.signs svg { width: 40px; height: 40px; flex: none; }
.signs figcaption { font: 900 8px/14px "Noto Sans CJK SC", sans-serif; padding-top: 1px; color: #111; white-space: nowrap; }
.signs .s7 figcaption { font-size: 7px; }
.signs .s6 figcaption { font-size: 6px; }
.signs .s5 figcaption { font-size: 5px; }
.signs .ban figcaption { color: #c8121e; }
.signs .must { width: 41px; }
.signs .must svg { width: 38px; height: 38px; }
.signs .must figcaption { color: #2abbe0; }
.ring { fill: none; stroke: #cb1522; stroke-width: 2.500; }
.tri { fill: #ffe600; stroke: #111; stroke-width: 3.500; stroke-linejoin: round; }
.phone { margin: 9px 0 0 16px; flex: 1; height: 47px; border: 1px dashed #4b6669; border-width: 1px 0 0 1px; color: #d0142c; font-size: 10px; line-height: 10px; }
.phone p { display: flex; justify-content: space-between; padding-right: 3px; }
.phone .n { padding-right: 36px; }

.vscroll { grid-column: 3; grid-row: 1 / 3; display: flex; flex-direction: column; align-items: center; background: #f5f5f5; }
.vscroll .mm { font-size: 5px; color: #888; height: 9px; }
.vscroll button { width: 9px; height: 9px; }
.thumb { width: 8px; height: 123px; margin: 125px 0 auto; background: #c8c8c8; flex: none; }
.chev { width: 4px; height: 4px; border: solid #333; border-width: 0 1px 1px 0; transform: rotate(45deg); }
.chev.up { transform: rotate(225deg); }
.chev.left { transform: rotate(135deg); }
.chev.right { transform: rotate(-45deg); }
.chev.pale { border-color: #999; }

.pagebar { height: 11px; flex: none; display: flex; align-items: center; padding-left: 10px; background: #f0f0f0; color: #999; }
.pagebar .nav { font-size: 5px; line-height: 6px; width: 8px; text-align: center; white-space: nowrap; }
.pagetab { background: #fff; color: #222; height: 11px; width: 26px; border: 1px solid #aaa; border-width: 0 1px; margin-left: 4px; }
.hpad { flex: 304 1 0; height: 9px; background: #eaeaea; border-right: 1px solid #aaa; }
.hscroll { flex: 380 1 0; height: 9px; display: flex; }
.hthumb { width: 250px; margin-left: 82px; background: #c8c8c8; }
.arrow { width: 10px; height: 9px; }
.docpal { height: 11px; flex: none; display: flex; padding: 1px 0 0 35px; }
.docpal i { width: 9px; height: 9px; border: 1px solid #888; }

.docker { position: relative; background: #f2f2f2; display: flex; flex-direction: column; min-width: 0; border-left: 1px solid #ddd; }
.docker header { height: 13px; background: #e4e4e4; display: flex; justify-content: space-between; align-items: center; padding: 0 4px 0 2px; font-size: 7px; }
.dctl { color: #999; }
.dtabs { display: flex; height: 14px; background: #ececec; gap: 1px; }
.dtabs button { width: 13px; }
.dtabs .on { background: #fff; border: 1px solid #ccc; }
.dtabs .big { font-size: 11px; }
.dbody { display: flex; flex-direction: column; padding: 0 11px 0 1px; gap: 3px; }
.dbody h3 { display: flex; align-items: center; font-size: 8px; font-weight: 700; height: 12px; gap: 6px; padding: 0 3px 0 4px; }
.fold { border: 2px solid transparent; border-bottom: 3px solid #555; border-top: 0; }
.ringdot { width: 4px; height: 4px; border: 1px solid #333; border-radius: 50%; margin-left: auto; }
.cb { width: 4px; height: 4px; border: 1px solid #d2d2d2; border-radius: 1px; flex: none; margin: 0 2px; }
.dbody h3 .cb { margin: 0; }
.cb.last, .dbody h3 .cb.last { margin-left: auto; }
.row { display: flex; align-items: center; height: 13px; gap: 2px; padding-right: 1px; }
.row.tall { margin-top: 3px; }
.row .ic { width: 9px; height: 9px; }
.row.off .sel, .row.off .num { border-color: #d4d4d4; background: #f2f2f2; }
.row.off select { opacity: 1; color: #bbb; }
.w87 { width: 88px; }
.w77 { width: 77px; }
.w60 { width: 60px; }
.w51 { width: 51px; }
.w34 { width: 36px; }
.w27 { width: 28px; }
.g { width: 9px; font-size: 7px; text-align: center; line-height: 9px; flex: none; }
.g.av { font-weight: 400; text-decoration: underline; }
.g.aa { width: 12px; color: #bbb; font-weight: 400; text-decoration: underline; }
.g.under { font-size: 10px; font-weight: 400; text-decoration: underline; }
.ga { font-size: 9px; border-bottom: 2px solid #3a8fb0; }
.go { font-size: 10px; color: #f2f2f2; -webkit-text-stroke: 2px #555; paint-order: stroke fill; }
.gab { background: #f18a1d; color: #fff; }
.gbox { background: #b5541b; color: #fff; }
.gblue { border: 1px solid #58a9c4; width: 10px; font-size: 8px; }
.colr { align-items: center; padding-left: 3px; }
.chip { width: 14px; height: 9px; background: #fff; }
.chip.dark { background: #1f1613; }
.dots { font-size: 7px; width: 14px; text-align: center; margin-left: 2px; }
.dots.push { margin-left: auto; }
.more { height: 9px; background: #e6e6e6; margin: 2px 0; }
.aligns { gap: 7px; }
.aligns button { width: 12px; height: 13px; border: 1px solid #bbb; background: #fff; margin-right: -3px; }
.frames .sp { margin-left: 9px; }
.activate { position: absolute; left: 23px; bottom: 5px; color: #b2b2b2; font: 11px/14px "Noto Sans", "Noto Sans CJK SC", sans-serif; white-space: nowrap; }
.activate .small { font-size: 8px; line-height: 12px; }

.sidetabs { background: #e4e4e4; padding-top: 13px; display: flex; flex-direction: column; align-items: center; gap: 2px; }
.vtab { width: 12px; height: 39px; background: #bcbcbc; writing-mode: vertical-rl; font-size: 8px; gap: 2px; }
.palette { background: #f0f0f0; display: flex; flex-direction: column; align-items: stretch; padding-top: 5px; min-height: 0; }
.palette button { height: 10px; flex: none; color: #888; }
.tri-r { border: 2px solid transparent; border-left: 3px solid #333; border-right: 0; }
.swatches { flex: none; display: flex; flex-direction: column; height: 415px; overflow: hidden; }
.swatches i { height: 9px; flex: 1 0 auto; border: 1px solid rgba(90, 90, 90, 0.5); border-bottom: 0; }

.status { height: 20px; flex: none; display: flex; align-items: center; border-top: 1px solid #ddd; background: #f2f2f2; padding: 0 6px 0 5px; position: relative; }
.status p { margin-left: 4px; white-space: nowrap; flex: 1; }
.fillinfo, .ink { display: flex; align-items: center; gap: 3px; white-space: nowrap; }
.fillinfo { width: 110px; }
.ink { width: 134px; gap: 2px; }
.boxed { border: 1px solid #999; background: #fff; }
.ink .chip { width: 11px; height: 11px; }
.ime { position: absolute; right: 309px; top: -3px; height: 18px; display: flex; align-items: center; gap: 3px; color: #2c7ad6; background: #fff; font-size: 9px; border-radius: 2px; padding: 0 3px 0 0; }
.ime .dotm { font-size: 8px; width: 7px; }
.sogou { width: 16px; height: 15px; border-radius: 3px; background: #fb5d1c; color: #fff; font-size: 13px; line-height: 15px; text-align: center; }
.mark { position: absolute; left: 16px; bottom: 4px; display: flex; align-items: center; gap: 7px; color: #fff; text-shadow: 0 0 1px #666, 0 0 2px #888; }
.mark b { font: 900 26px/26px "Noto Sans CJK SC", sans-serif; }
.mark em { font: italic 700 17px/20px "Liberation Sans", sans-serif; }
.idband { position: absolute; right: 12px; bottom: 10px; height: 20px; padding: 0 9px; background: rgba(140, 140, 140, 0.6); color: #fff; font: 11px/20px "Liberation Sans", sans-serif; white-space: nowrap; }
```

FILE: script.js
```js
const NS = "http://www.w3.org/2000/svg";
const STEP = 45.2;

function add(svg, tag, attrs, text) {
  const el = document.createElementNS(NS, tag);
  for (const k in attrs) el.setAttribute(k, attrs[k]);
  if (text !== undefined) el.textContent = text;
  svg.appendChild(el);
}

const h = document.getElementById("hruler");
const origin = 82;
for (let n = -1; n < 16; n++) {
  const x = origin + n * STEP;
  add(h, "text", { x, y: 5, "text-anchor": "middle" }, Math.abs(n * 20));
  for (let t = 0; t < 10; t++) {
    const tx = x + t * STEP / 10;
    add(h, "path", { d: `M${tx} ${t ? 7 : 5}V9`, stroke: "#aaa", "stroke-width": 1 });
  }
}

const v = document.getElementById("vruler");
for (let n = -1; n < 10; n++) {
  const y = 33 + n * STEP;
  if (n >= 0) add(v, "text", { transform: `translate(6 ${y}) rotate(-90)`, "text-anchor": "middle" }, 260 - n * 20);
  for (let t = 0; t < 10; t++) {
    const ty = y + t * STEP / 10;
    add(v, "path", { d: `M${t ? 8 : 6} ${ty}H10`, stroke: "#aaa", "stroke-width": 1 });
  }
}

function fill(id, colours) {
  const box = document.getElementById(id);
  for (const c of colours) {
    const sw = document.createElement("i");
    sw.style.background = c;
    box.appendChild(sw);
  }
}

fill("swatches", ["linear-gradient(135deg,#fff 45%,#d66 45%,#d66 55%,#fff 55%)",
  "#1f1a17", "#3b3838", "#4d4c4c", "#666", "#808080", "#979797", "#a9a9a9", "#bdbdbd", "#cfcfcf", "#e8e8e8", "#fff",
  "#1d2088", "#00a0e9", "#009944", "#fff100", "#e60012", "#e4007f", "#a8468a", "#ee8408", "#f3b2b2", "#87776c",
  "#cfcbe6", "#a69bc8", "#6f86c6", "#7468a8", "#8a7fb0", "#4d628c", "#56506e", "#6f86a4", "#0088d8", "#98d8f8",
  "#b0c8d8", "#90a4b0", "#707f8a", "#46525a", "#507070", "#40907a", "#6f9898", "#50a880", "#50a060", "#50c0d0",
  "#50a8a8", "#b8ccb8", "#d8ecd8", "#a0d0a0"]);

fill("docpal", ["#fff", "#e01020", "#fff", "#c01828", "#4a90b8", "#d9f7fd", "#c2eef8", "#b4e6f4", "#000", "#b8e4f4",
  "#d4f4fc", "#fff", "#e01020", "#10c0f0", "#0f0", "#fff", "#000", "#231a14", "#fff"]);
```
